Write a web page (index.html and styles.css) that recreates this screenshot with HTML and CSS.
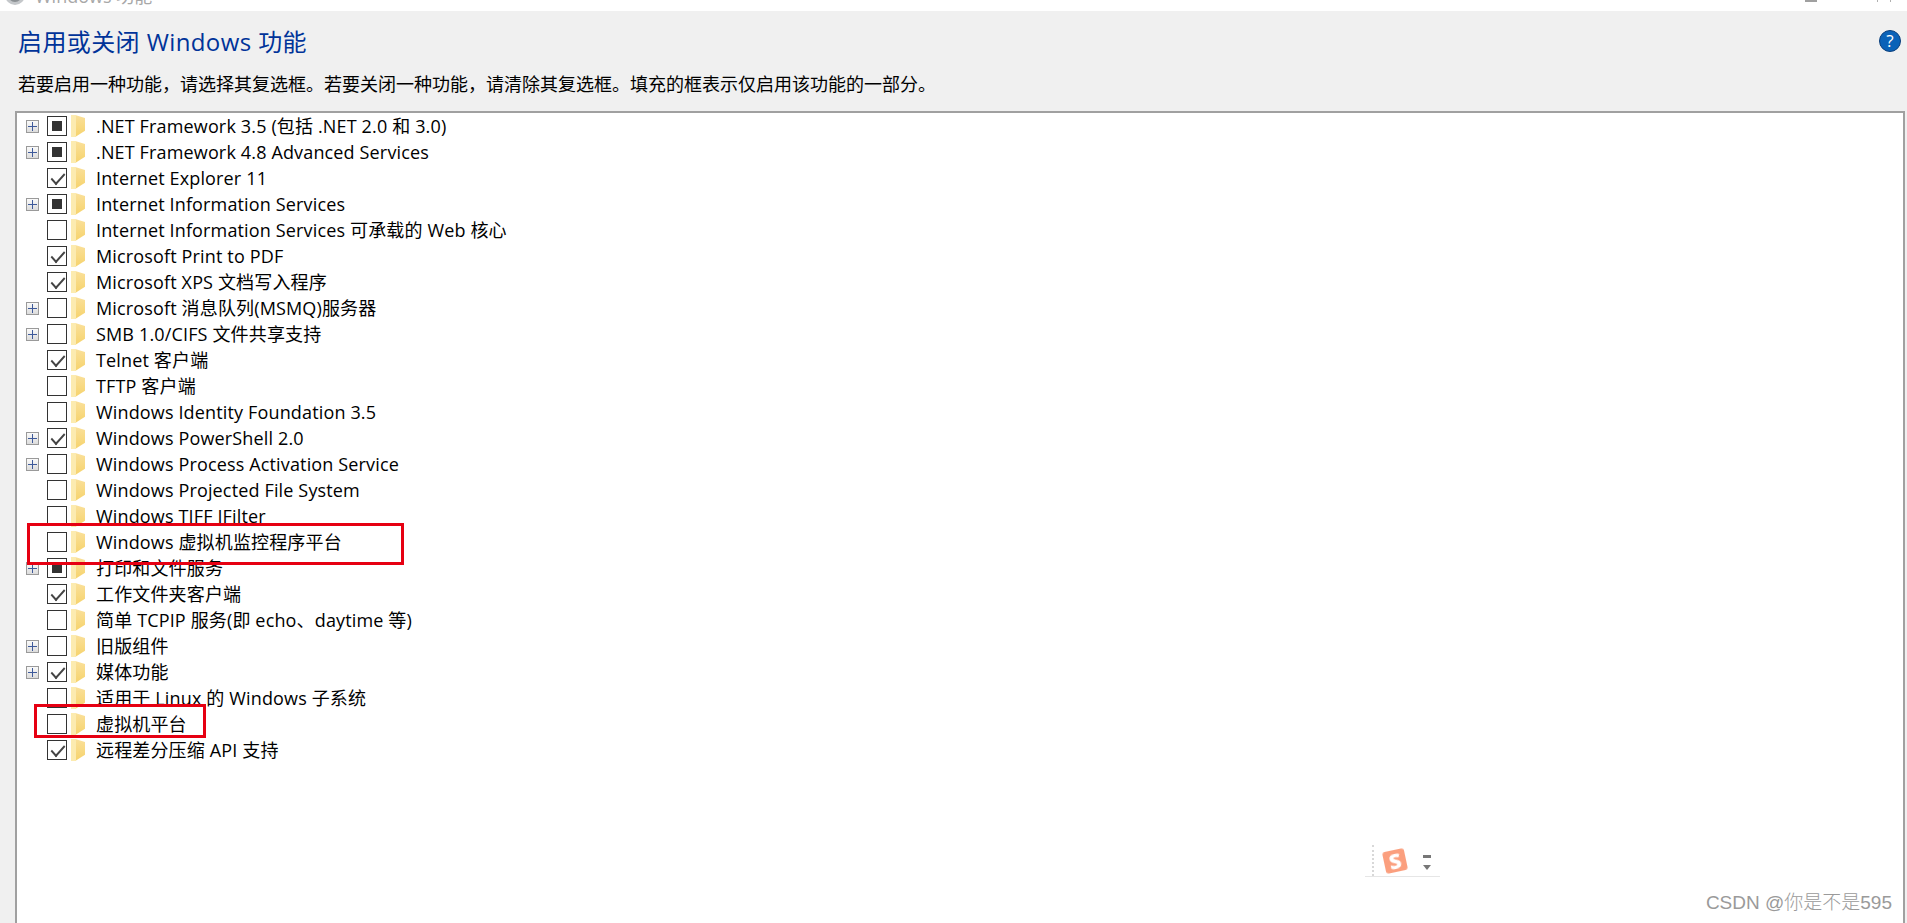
FILE: index.html
```html
<!DOCTYPE html>
<html lang="zh-CN">
<head>
<meta charset="utf-8">
<title>Windows 功能</title>
<link rel="stylesheet" href="styles.css">
</head>
<body>
<div class="titlebar">
  <svg class="app-icon" width="20" height="20" viewBox="0 0 20 20"><circle cx="10" cy="10" r="10" fill="#c4c7ca"/><circle cx="10" cy="10" r="7" fill="#8b9094"/></svg>
  <span class="window-title">Windows 功能</span>
  <span class="min-btn"></span>
  <span class="close-tick first"></span>
  <span class="close-tick"></span>
</div>
<main class="panel">
  <header class="head">
    <div class="head-text">
      <h1 class="heading">启用或关闭 Windows 功能</h1>
      <p class="sub">若要启用一种功能，请选择其复选框。若要关闭一种功能，请清除其复选框。填充的框表示仅启用该功能的一部分。</p>
    </div>
    <span class="help">?</span>
  </header>
  <ul class="tree">
    <li class="row"><span class="exp"></span><span class="cb part"></span><span class="folder"></span><span class="label">.NET Framework 3.5 (包括 .NET 2.0 和 3.0)</span></li>
    <li class="row"><span class="exp"></span><span class="cb part"></span><span class="folder"></span><span class="label">.NET Framework 4.8 Advanced Services</span></li>
    <li class="row"><span class="exp none"></span><span class="cb on"></span><span class="folder"></span><span class="label">Internet Explorer 11</span></li>
    <li class="row"><span class="exp"></span><span class="cb part"></span><span class="folder"></span><span class="label">Internet Information Services</span></li>
    <li class="row"><span class="exp none"></span><span class="cb"></span><span class="folder"></span><span class="label">Internet Information Services 可承载的 Web 核心</span></li>
    <li class="row"><span class="exp none"></span><span class="cb on"></span><span class="folder"></span><span class="label">Microsoft Print to PDF</span></li>
    <li class="row"><span class="exp none"></span><span class="cb on"></span><span class="folder"></span><span class="label">Microsoft XPS 文档写入程序</span></li>
    <li class="row"><span class="exp"></span><span class="cb"></span><span class="folder"></span><span class="label">Microsoft 消息队列(MSMQ)服务器</span></li>
    <li class="row"><span class="exp"></span><span class="cb"></span><span class="folder"></span><span class="label">SMB 1.0/CIFS 文件共享支持</span></li>
    <li class="row"><span class="exp none"></span><span class="cb on"></span><span class="folder"></span><span class="label">Telnet 客户端</span></li>
    <li class="row"><span class="exp none"></span><span class="cb"></span><span class="folder"></span><span class="label">TFTP 客户端</span></li>
    <li class="row"><span class="exp none"></span><span class="cb"></span><span class="folder"></span><span class="label">Windows Identity Foundation 3.5</span></li>
    <li class="row"><span class="exp"></span><span class="cb on"></span><span class="folder"></span><span class="label">Windows PowerShell 2.0</span></li>
    <li class="row"><span class="exp"></span><span class="cb"></span><span class="folder"></span><span class="label">Windows Process Activation Service</span></li>
    <li class="row"><span class="exp none"></span><span class="cb"></span><span class="folder"></span><span class="label">Windows Projected File System</span></li>
    <li class="row"><span class="exp none"></span><span class="cb"></span><span class="folder"></span><span class="label">Windows TIFF IFilter</span></li>
    <li class="row"><span class="exp none"></span><span class="cb"></span><span class="folder"></span><span class="label">Windows 虚拟机监控程序平台</span></li>
    <li class="row"><span class="exp"></span><span class="cb part"></span><span class="folder"></span><span class="label">打印和文件服务</span></li>
    <li class="row"><span class="exp none"></span><span class="cb on"></span><span class="folder"></span><span class="label">工作文件夹客户端</span></li>
    <li class="row"><span class="exp none"></span><span class="cb"></span><span class="folder"></span><span class="label">简单 TCPIP 服务(即 echo、daytime 等)</span></li>
    <li class="row"><span class="exp"></span><span class="cb"></span><span class="folder"></span><span class="label">旧版组件</span></li>
    <li class="row"><span class="exp"></span><span class="cb on"></span><span class="folder"></span><span class="label">媒体功能</span></li>
    <li class="row"><span class="exp none"></span><span class="cb"></span><span class="folder"></span><span class="label">适用于 Linux 的 Windows 子系统</span></li>
    <li class="row"><span class="exp none"></span><span class="cb"></span><span class="folder"></span><span class="label">虚拟机平台</span></li>
    <li class="row"><span class="exp none"></span><span class="cb on"></span><span class="folder"></span><span class="label">远程差分压缩 API 支持</span></li>
  </ul>
</main>
<div class="mark mark-a"></div>
<div class="mark mark-b"></div>
<div class="ime">
  <span class="ime-logo">S</span>
  <span class="ime-min"></span>
  <span class="ime-arrow"></span>
</div>
<div class="watermark">CSDN @你是不是595</div>
</body>
</html>
```
FILE: styles.css
```css
* { box-sizing: border-box; }
html, body { margin: 0; height: 100%; overflow: hidden; background: #fff; }
body {
  font-family: "Open Sans", "Noto Sans CJK SC", sans-serif;
  color: #000;
  position: relative;
  display: flex;
  flex-direction: column;
}
.titlebar {
  height: 11px;
  flex: none;
  overflow: hidden;
  display: flex;
  align-items: flex-end;
  background: #fff;
  padding-left: 5px;
}
.app-icon { flex: none; align-self: flex-start; margin-top: -15px; }
.window-title {
  font-size: 18px;
  line-height: 26px;
  color: #a8a8a8;
  margin-left: 10px;
  margin-bottom: 2px;
  flex: none;
}
.min-btn { width: 12px; height: 2px; background: #a0a0a0; margin-left: auto; margin-right: 60px; flex: none; align-self: flex-start; }
.close-tick { width: 1px; height: 2px; background: #b0b0b0; margin-right: 16px; flex: none; align-self: flex-start; }
.close-tick.first { margin-right: 12px; }
.panel {
  flex: 1;
  min-height: 0;
  display: flex;
  flex-direction: column;
  background: #f0f0f0;
  padding: 0 2px 0 15px;
}
.head { display: flex; justify-content: space-between; flex: none; height: 100px; }
.head-text { padding-left: 3px; }
.heading {
  margin: 14px 0 0;
  font-size: 24px;
  line-height: 34px;
  font-weight: 400;
  letter-spacing: 0.4px;
  color: #003399;
}
.sub { margin: 12px 0 0; font-size: 18px; line-height: 26px; }
.help {
  width: 22px;
  height: 22px;
  margin: 19px 4px 0 0;
  border-radius: 50%;
  background: #0a62b8;
  border: 1px solid #0a3f7d;
  color: #fff;
  font-size: 17px;
  line-height: 20px;
  text-align: center;
}
.tree {
  flex: 1;
  min-height: 0;
  list-style: none;
  margin: 0;
  padding: 0;
  background: #fff;
  border: 2px solid #a0a0a0;
  border-bottom: 0;
}
.row { display: flex; align-items: center; height: 26px; }
.exp {
  width: 13px;
  height: 13px;
  flex: none;
  margin-left: 9px;
  margin-right: 8px;
  border: 1px solid #9a9a9a;
  background:
    linear-gradient(#3e5a9a, #3e5a9a) center / 9px 1px no-repeat,
    linear-gradient(#3e5a9a, #3e5a9a) center / 1px 9px no-repeat,
    linear-gradient(#fafafa, #dcdcdc);
}
.exp.none { visibility: hidden; }
.cb {
  width: 20px;
  height: 20px;
  flex: none;
  border: 1px solid #333;
  background: #fff;
  position: relative;
}
.cb.part::after {
  content: "";
  position: absolute;
  left: 4px;
  top: 4px;
  width: 10px;
  height: 10px;
  background: #333;
}
.cb.on::after {
  content: "";
  position: absolute;
  left: 3px;
  top: 4px;
  width: 12px;
  height: 6px;
  border-left: 2px solid #444;
  border-bottom: 2px solid #444;
  transform: rotate(-48deg) skewX(-6deg);
}
.folder {
  width: 14px;
  height: 22px;
  flex: none;
  margin-left: 4px;
  margin-right: 11px;
  background:
    linear-gradient(90deg, #fcebb0 0 5px, transparent 5px),
    linear-gradient(#fae09a, #f6d36c);
  clip-path: polygon(0 0, 30% 0, 100% 14%, 100% 72%, 30% 100%, 0 100%);
}
.label { font-size: 18px; line-height: 26px; letter-spacing: 0.15px; white-space: nowrap; color: #000; }
.mark { position: absolute; border: 3px solid #e60012; }
.mark-a { left: 27px; top: 523px; width: 377px; height: 42px; }
.mark-b { left: 34px; top: 704px; width: 172px; height: 34px; }
.ime {
  position: absolute;
  left: 1365px;
  top: 845px;
  width: 75px;
  height: 32px;
  border-bottom: 1px solid #e6e6e6;
}
.ime::before {
  content: "";
  position: absolute;
  left: 7px;
  top: 0;
  bottom: 0;
  border-left: 2px dotted #d8d8d8;
}
.ime-logo {
  position: absolute;
  left: 19px;
  top: 5px;
  width: 22px;
  height: 22px;
  background: #fb9f7e;
  border-radius: 3px;
  transform: rotate(-12deg);
  color: #fff;
  font: 800 21px/22px "Open Sans", sans-serif;
  text-align: center;
  filter: blur(0.4px);
}
.ime-min { position: absolute; left: 58px; top: 10px; width: 8px; height: 3px; background: #777; }
.ime-arrow {
  position: absolute;
  left: 58px;
  top: 20px;
  width: 0;
  height: 0;
  border-left: 4px solid transparent;
  border-right: 4px solid transparent;
  border-top: 5px solid #777;
}
.watermark {
  position: absolute;
  right: 15px;
  top: 892px;
  font-family: "Liberation Sans", "Noto Sans CJK SC", sans-serif;
  font-size: 19px;
  line-height: 22px;
  font-weight: 300;
  color: #9a9a9a;
}
```
